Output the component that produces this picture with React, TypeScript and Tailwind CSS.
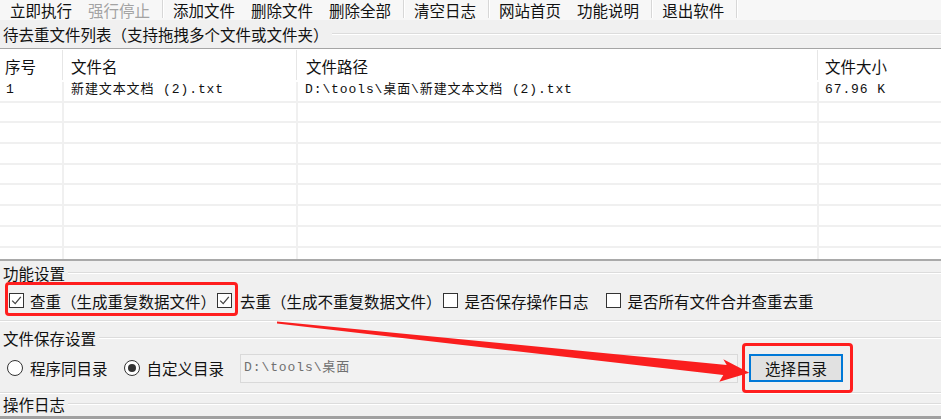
import React from 'react';

const ui = "font-['Noto_Sans_CJK_SC',sans-serif]";
const mono = "font-['Liberation_Mono','Noto_Sans_CJK_SC',monospace]";

// toolbar groups, separated by thin vertical bars
const toolbarGroups = [
  [{ label: '立即执行' }, { label: '强行停止', disabled: true }],
  [{ label: '添加文件' }, { label: '删除文件' }, { label: '删除全部' }],
  [{ label: '清空日志' }],
  [{ label: '网站首页' }, { label: '功能说明' }],
  [{ label: '退出软件' }],
];

const files = [
  { id: '1', name: '新建文本文档 (2).txt', path: 'D:\\tools\\桌面\\新建文本文档 (2).txt', size: '67.96 K' },
];

const headers = [
  { text: '序号', pad: 'pl-[5px]' },
  { text: '文件名', pad: 'pl-[7px]' },
  { text: '文件路径', pad: 'pl-[8px]' },
  { text: '文件大小', pad: 'pl-[6px]' },
];

const cols = 'grid grid-cols-[64px_234px_521px_1fr]';

const Separator = () => (
  <div className="h-[2px] border-t border-t-[#dcdcdc] border-b border-b-white" />
);

const GroupTitle = ({ text, className = '' }: { text: string; className?: string }) => (
  <div className={`flex items-center pl-[3px] ${className}`}>
    <span className="text-[15.5px] leading-[18px] whitespace-nowrap">{text}</span>
    <span className="flex-1 ml-[3px] h-[2px] border-t border-t-[#dcdcdc] border-b border-b-white" />
  </div>
);

const Check = ({ checked, className = '' }: { checked?: boolean; className?: string }) => (
  <span className={`w-[15px] h-[15px] border border-[#333] bg-white flex items-center justify-center shrink-0 ${className}`}>
    {checked && (
      <svg width="11" height="11" viewBox="0 0 11 11">
        <path d="M1.2 5.6 L4.2 8.6 L9.8 1.8" fill="none" stroke="#444" strokeWidth="1.3" />
      </svg>
    )}
  </span>
);

const Radio = ({ checked, className = '' }: { checked?: boolean; className?: string }) => (
  <span className={`w-[16px] h-[16px] rounded-full border border-[#333] bg-white flex items-center justify-center shrink-0 ${className}`}>
    {checked && <span className="w-[8px] h-[8px] rounded-full bg-[#333]" />}
  </span>
);

const App = () => {
  const emptyRows = Array.from({ length: 8 });

  return (
    <div className={`relative w-[941px] h-[419px] overflow-hidden bg-[#f0f0f0] text-[#111] ${ui}`}>
      {/* toolbar */}
      <div className="h-[20px] flex items-start pl-[2px] bg-[#f7f7f7]">
        {toolbarGroups.map((group, gi) => (
          <React.Fragment key={gi}>
            {group.map(item => (
              <span
                key={item.label}
                className={`px-2 text-[15.5px] leading-[20px] whitespace-nowrap ${item.disabled ? 'text-[#a3a3a3]' : ''}`}
              >
                {item.label}
              </span>
            ))}
            <span className="ml-[4px] mr-[1px] w-[2px] h-[18px] border-l border-l-[#d7d7d7] border-r border-r-white" />
          </React.Fragment>
        ))}
      </div>

      <GroupTitle text="待去重文件列表（支持拖拽多个文件或文件夹）" className="h-[28px]" />

      {/* file list */}
      <div className="h-[213px] bg-white border-t border-t-[#a5a5a5] border-b-2 border-b-[#a9a9a9] overflow-hidden">
        <div className={`${cols} h-[33px] text-[15.5px]`}>
          {headers.map((h, i) => (
            <div key={h.text} className={`flex items-center ${h.pad}`}>
              <span className="flex-1 leading-[18px]">{h.text}</span>
              {i < 3 && <span className="w-px h-[30px] self-start mt-[1px] mr-[1px] bg-[#e6e6e6]" />}
            </div>
          ))}
        </div>
        {files.map(f => (
          <div key={f.id} className={`${cols} h-[20.7px] border-b-2 border-[#f0f0f0] text-[13px] tracking-[0.9px] ${mono}`}>
            <div className="border-r-2 border-[#f0f0f0] pl-[6px] leading-[16px] whitespace-nowrap">{f.id}</div>
            <div className="border-r-2 border-[#f0f0f0] pl-[7px] leading-[16px] whitespace-nowrap">{f.name}</div>
            <div className="border-r-2 border-[#f0f0f0] pl-[7px] leading-[16px] whitespace-nowrap">{f.path}</div>
            <div className="pl-[6px] leading-[16px] whitespace-nowrap">{f.size}</div>
          </div>
        ))}
        {emptyRows.map((_, i) => (
          <div key={i} className={`${cols} h-[20.7px] border-b-2 border-[#f0f0f0]`}>
            <div className="border-r-2 border-[#f0f0f0]" />
            <div className="border-r-2 border-[#f0f0f0]" />
            <div className="border-r-2 border-[#f0f0f0]" />
            <div />
          </div>
        ))}
      </div>

      <GroupTitle text="功能设置" className="h-[24px]" />

      <div className="h-[31px] flex items-center text-[15.5px] leading-[18px] whitespace-nowrap">
        <Check checked className="ml-[9px]" />
        <span className="ml-[6px]">查重（生成重复数据文件）</span>
        <Check checked className="ml-[1px]" />
        <span className="ml-[8px]">去重（生成不重复数据文件）</span>
        <Check className="ml-[1px]" />
        <span className="ml-[7px]">是否保存操作日志</span>
        <Check className="ml-[17px]" />
        <span className="ml-[7px]">是否所有文件合并查重去重</span>
      </div>

      <div className="h-[4px]" />
      <Separator />

      <GroupTitle text="文件保存设置" className="h-[31px]" />

      <div className="h-[30px] flex items-center text-[15.5px] leading-[18px] whitespace-nowrap">
        <Radio className="ml-[7px]" />
        <span className="ml-[7px]">程序同目录</span>
        <Radio checked className="ml-[16px]" />
        <span className="ml-[7px]">自定义目录</span>
        <div className={`ml-[16px] w-[498px] h-[29px] flex items-center pl-[3px] border border-[#d9d9d9] bg-[#f2f2f2] text-[#707070] text-[13px] tracking-[0.9px] ${mono}`}>
          D:\tools\桌面
        </div>
        <button className="ml-[11px] w-[94px] h-[28px] border-2 border-[#0078d7] bg-[#e1e1e1] text-[15.5px] leading-[18px]">
          选择目录
        </button>
      </div>

      <div className="h-[9px]" />
      <Separator />

      <GroupTitle text="操作日志" className="h-[19px]" />
      <div className="h-[3px]" />
      <div className="h-[3px] bg-[#a0a0a0]" />

      {/* red annotation overlays */}
      <div className="absolute left-[5px] top-[282px] w-[233px] h-[34px] border-[3px] border-[#ff1e1e] rounded-[4px]" />
      <div className="absolute left-[742px] top-[343px] w-[111px] h-[50px] border-[3px] border-[#ff1e1e] rounded-[4px]" />
      <svg className="absolute left-0 top-0 pointer-events-none" width="941" height="419" viewBox="0 0 941 419">
        <polygon
          points="277,321.5 726.7,365 723.3,359.3 749.3,372.7 719.3,381.7 723.3,375 277,323.5"
          fill="#fa1e1e"
        />
      </svg>
    </div>
  );
};

export default App;
